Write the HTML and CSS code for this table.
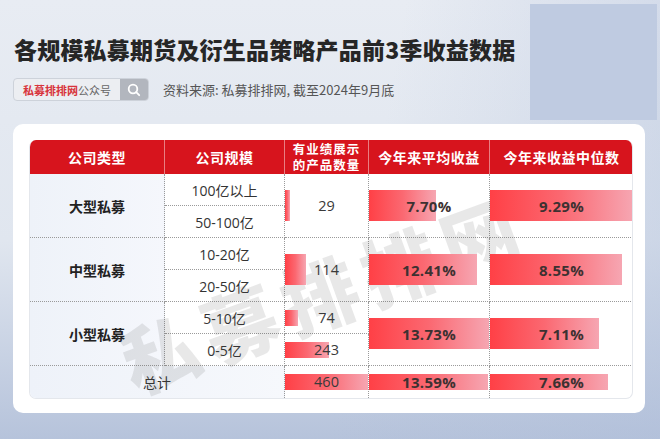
FILE: index.html
```html
<!DOCTYPE html>
<html lang="zh">
<head>
<meta charset="utf-8">
<link rel="stylesheet" href="styles.css">
</head>
<body>
<div class="page">
  <div class="deco"></div>
  <h1 class="title">各规模私募期货及衍生品策略产品前3季收益数据</h1>
  <div class="meta">
    <div class="search">
      <span class="brand"><b>私募排排网</b>公众号</span>
      <span class="btn"><svg width="14" height="14" viewBox="0 0 14 14"><circle cx="6" cy="6" r="4.3" fill="none" stroke="#fff" stroke-width="1.8"/><line x1="9.2" y1="9.2" x2="12.2" y2="12.2" stroke="#fff" stroke-width="1.8" stroke-linecap="round"/></svg></span>
    </div>
    <span class="source">资料来源: 私募排排网, 截至2024年9月底</span>
  </div>
  <div class="card">
    <div class="table">
      <div class="th">公司类型</div>
      <div class="th">公司规模</div>
      <div class="th small"><span>有业绩展示</span><span>的产品数量</span></div>
      <div class="th">今年来平均收益</div>
      <div class="th last">今年来收益中位数</div>

      <div class="td type span2">大型私募</div>
      <div class="td size">100亿以上</div>
      <div class="td bc span2"><i class="bar tall" style="width:5px"></i><span class="num">29</span></div>
      <div class="td bc span2"><i class="bar tall" style="width:67px"></i><span class="pct">7.70%</span></div>
      <div class="td bc span2 last"><i class="bar tall" style="width:143px"></i><span class="pct">9.29%</span></div>
      <div class="td size">50-100亿</div>

      <div class="td type span2">中型私募</div>
      <div class="td size">10-20亿</div>
      <div class="td bc span2"><i class="bar tall" style="width:21px"></i><span class="num">114</span></div>
      <div class="td bc span2"><i class="bar tall" style="width:108px"></i><span class="pct">12.41%</span></div>
      <div class="td bc span2 last"><i class="bar tall" style="width:132px"></i><span class="pct">8.55%</span></div>
      <div class="td size">20-50亿</div>

      <div class="td type span2">小型私募</div>
      <div class="td size">5-10亿</div>
      <div class="td bc"><i class="bar short" style="width:13px"></i><span class="num">74</span></div>
      <div class="td bc span2"><i class="bar tall" style="width:120px"></i><span class="pct">13.73%</span></div>
      <div class="td bc span2 last"><i class="bar tall" style="width:109px"></i><span class="pct">7.11%</span></div>
      <div class="td size">0-5亿</div>
      <div class="td bc"><i class="bar short" style="width:44px"></i><span class="num">243</span></div>

      <div class="td total">总计</div>
      <div class="td bc end"><i class="bar short" style="width:83px"></i><span class="num">460</span></div>
      <div class="td bc end"><i class="bar short" style="width:119px"></i><span class="pct">13.59%</span></div>
      <div class="td bc end last"><i class="bar short" style="width:118px"></i><span class="pct">7.66%</span></div>
    </div>
    <div class="watermark">私募排排网</div>
  </div>
</div>
</body>
</html>
```
FILE: styles.css
```css
* { box-sizing: border-box; margin: 0; padding: 0; }
html, body { width: 660px; height: 439px; overflow: hidden; }
body {
  font-family: "Open Sans", "Noto Sans CJK SC", sans-serif;
  color: #333;
}
.page {
  position: relative;
  width: 660px;
  height: 439px;
  padding: 34px 0 0 13px;
  background:
    linear-gradient(100deg, rgba(255,255,255,0) 55%, rgba(175,190,218,0.45) 100%),
    linear-gradient(180deg, #e8ecf3 0%, #e0e6ef 55%, #b6c3db 100%);
}
.deco {
  position: absolute;
  left: 530px;
  top: 4px;
  width: 127px;
  height: 116px;
  background: #bfcbe1;
}
.title {
  position: relative;
  font-family: "Noto Sans CJK SC", sans-serif;
  font-size: 23px;
  font-weight: 900;
  line-height: 30px;
  color: #262626;
  letter-spacing: 0.2px;
  padding-left: 1px;
}
.meta {
  display: flex;
  align-items: center;
  margin-top: 14px;
  height: 23px;
  gap: 14px;
}
.search {
  display: flex;
  height: 23px;
  width: 136px;
  border: 1px solid #cdd2da;
  border-radius: 4px;
  overflow: hidden;
  background: #eceef2;
}
.brand {
  flex: 1;
  display: flex;
  align-items: center;
  padding-left: 9px;
  font-family: "Noto Sans CJK SC", sans-serif;
  font-size: 11px;
  color: #666;
  white-space: nowrap;
}
.brand b { color: #d8343c; font-weight: 700; }
.btn {
  width: 28px;
  display: flex;
  align-items: center;
  justify-content: center;
  background: #b2b6be;
}
.source {
  font-family: "Noto Sans CJK SC", sans-serif;
  font-size: 13px;
  color: #555;
}
.card {
  position: relative;
  margin-top: 23px;
  width: 632px;
  height: 289px;
  background: #fff;
  border-radius: 10px;
  padding: 16px 13px 0 16px;
  overflow: hidden;
}
.table {
  display: grid;
  grid-template-columns: 135px 120px 84px 121px 143px;
  grid-template-rows: 34px repeat(7, 32px);
  border: 1px solid #e4e7ec;
  border-top: 0;
  border-radius: 7px;
  overflow: hidden;
  width: 604px;
}
.th {
  background: #d7141d;
  color: #fff;
  font-family: "Noto Sans CJK SC", sans-serif;
  font-weight: 700;
  font-size: 14px;
  letter-spacing: 0.5px;
  display: flex;
  align-items: center;
  justify-content: center;
  text-align: center;
  border-right: 1px solid rgba(255,255,255,0.45);
}
.th.small {
  flex-direction: column;
  font-size: 12.5px;
  line-height: 16px;
  letter-spacing: 1px;
}
.th.last { border-right: 0; }
.td {
  display: flex;
  align-items: center;
  justify-content: center;
  border-right: 1px dotted #9a9a9a;
  border-bottom: 1px dotted #9a9a9a;
  font-size: 14px;
}
.td.last { border-right: 0; }
.td.end { border-bottom: 0; }
.span2 { grid-row: span 2; }
.type {
  background: linear-gradient(90deg, #eef2f9, #f5f7fc);
  font-family: "Noto Sans CJK SC", sans-serif;
  font-weight: 700;
  color: #222;
}
.size { color: #333; }
.total {
  grid-column: span 2;
  border-bottom: 0;
  background: linear-gradient(90deg, #eef2f9, #f6f8fc);
  font-family: "Noto Sans CJK SC", sans-serif;
  color: #333;
}
.td.bc {
  display: grid;
  grid-template-columns: 100%;
  grid-template-rows: 100%;
  justify-content: stretch;
  align-items: center;
  justify-items: center;
}
.bar {
  grid-area: 1 / 1;
  justify-self: start;
  position: relative;
  z-index: 2;
  background: linear-gradient(90deg, #ff4046 0%, #fb6871 50%, #f6a6b2 100%);
}
.bar.tall { height: 31px; }
.bar.short { height: 16px; }
.num, .pct {
  grid-area: 1 / 1;
  position: relative;
  z-index: 3;
  line-height: 18px;
}
.num { font-size: 14.5px; color: #3a3a3a; }
.pct { font-size: 15px; font-weight: 700; color: #3d3131; letter-spacing: 0.3px; }
.watermark {
  position: absolute;
  left: calc(50% - 6px);
  top: calc(50% + 22px);
  transform: translate(-50%, -50%) rotate(-20deg);
  font-family: "Noto Sans CJK SC", sans-serif;
  font-size: 76px;
  line-height: 90px;
  font-weight: 900;
  letter-spacing: 9px;
  color: rgba(80, 80, 80, 0.13);
  white-space: nowrap;
  z-index: 1;
  pointer-events: none;
}
```
